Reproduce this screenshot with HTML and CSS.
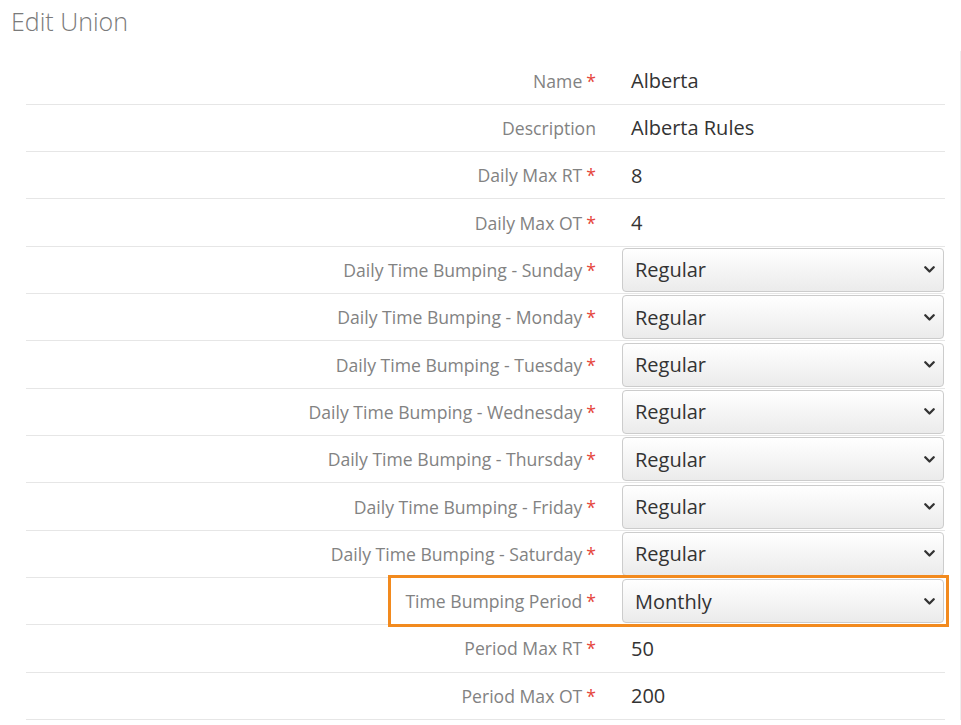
FILE: index.html
```html
<!DOCTYPE html>
<html lang="en">
<head>
<meta charset="utf-8">
<title>Edit Union</title>
<link rel="stylesheet" href="styles.css">
</head>
<body>
<h1 class="page-title">Edit Union</h1>
<div class="panel">
  <div class="form-table">
    <div class="row"><div class="label">Name<span class="req">*</span></div><div class="value"><span class="text">Alberta</span></div></div>
    <div class="row"><div class="label">Description</div><div class="value"><span class="text">Alberta Rules</span></div></div>
    <div class="row"><div class="label">Daily Max RT<span class="req">*</span></div><div class="value"><span class="text">8</span></div></div>
    <div class="row"><div class="label">Daily Max OT<span class="req">*</span></div><div class="value"><span class="text">4</span></div></div>
    <div class="row"><div class="label">Daily Time Bumping - Sunday<span class="req">*</span></div><div class="value"><select class="select"><option>Regular</option></select></div></div>
    <div class="row"><div class="label">Daily Time Bumping - Monday<span class="req">*</span></div><div class="value"><select class="select"><option>Regular</option></select></div></div>
    <div class="row"><div class="label">Daily Time Bumping - Tuesday<span class="req">*</span></div><div class="value"><select class="select"><option>Regular</option></select></div></div>
    <div class="row"><div class="label">Daily Time Bumping - Wednesday<span class="req">*</span></div><div class="value"><select class="select"><option>Regular</option></select></div></div>
    <div class="row"><div class="label">Daily Time Bumping - Thursday<span class="req">*</span></div><div class="value"><select class="select"><option>Regular</option></select></div></div>
    <div class="row"><div class="label">Daily Time Bumping - Friday<span class="req">*</span></div><div class="value"><select class="select"><option>Regular</option></select></div></div>
    <div class="row"><div class="label">Daily Time Bumping - Saturday<span class="req">*</span></div><div class="value"><select class="select"><option>Regular</option></select></div></div>
    <div class="row row-highlight"><div class="label">Time Bumping Period<span class="req">*</span></div><div class="value"><select class="select"><option>Monthly</option></select></div></div>
    <div class="row"><div class="label">Period Max RT<span class="req">*</span></div><div class="value"><span class="text">50</span></div></div>
    <div class="row"><div class="label">Period Max OT<span class="req">*</span></div><div class="value"><span class="text">200</span></div></div>
  </div>
</div>
</body>
</html>
```
FILE: styles.css
```css
html, body {
  margin: 0;
  padding: 0;
  background: #ffffff;
}

body {
  font-family: "Open Sans", "Noto Sans", sans-serif;
  color: #333333;
}

.page-title {
  margin: 0;
  padding: 6px 0 0 11px;
  height: 51px;
  box-sizing: border-box;
  font-size: 25px;
  font-weight: 300;
  color: #7a7a7a;
  line-height: 30px;
}

.panel {
  margin-left: 26px;
  width: 935px;
  border-right: 1px solid #eeeeee;
  box-sizing: border-box;
  padding-top: 6.4px;
}

.form-table {
  width: 919px;
}

.row {
  position: relative;
  display: grid;
  grid-template-columns: 584px 1fr;
  height: 47.33px;
  box-sizing: border-box;
  border-bottom: 1px solid #e6e6e6;
  align-items: center;
}

.label {
  text-align: right;
  padding-right: 14px;
  font-size: 17.6px;
  color: #828282;
  white-space: nowrap;
}

.req {
  color: #e5453a;
  margin-left: 4px;
}

.value {
  padding-left: 12px;
}

.text {
  display: inline-block;
  padding-left: 9px;
  font-size: 20px;
  color: #333333;
}

.select {
  display: block;
  width: 322px;
  height: 44px;
  margin: 0;
  padding: 0 30px 0 12px;
  border: 1px solid #cccccc;
  border-radius: 4px;
  font-family: "Open Sans", "Noto Sans", sans-serif;
  font-size: 20px;
  color: #333333;
  -webkit-appearance: none;
  appearance: none;
  background-color: #f4f4f4;
  background-image:
    url("data:image/svg+xml,%3Csvg xmlns='http://www.w3.org/2000/svg' width='11' height='7' viewBox='0 0 11 7'%3E%3Cpath d='M1.3 1.3 L5.5 5.5 L9.7 1.3' fill='none' stroke='%23333' stroke-width='2.3' stroke-linecap='round' stroke-linejoin='round'/%3E%3C/svg%3E"),
    linear-gradient(#ffffff, #ebebeb);
  background-repeat: no-repeat, no-repeat;
  background-position: right 8px center, 0 0;
  background-size: 11px 7px, 100% 100%;
}

/* emphasis frame around the period selector row */
.row-highlight::after {
  content: "";
  position: absolute;
  left: 362px;
  right: -4px;
  top: -3px;
  bottom: -3px;
  border: 3px solid #f28a1e;
  pointer-events: none;
}
```
